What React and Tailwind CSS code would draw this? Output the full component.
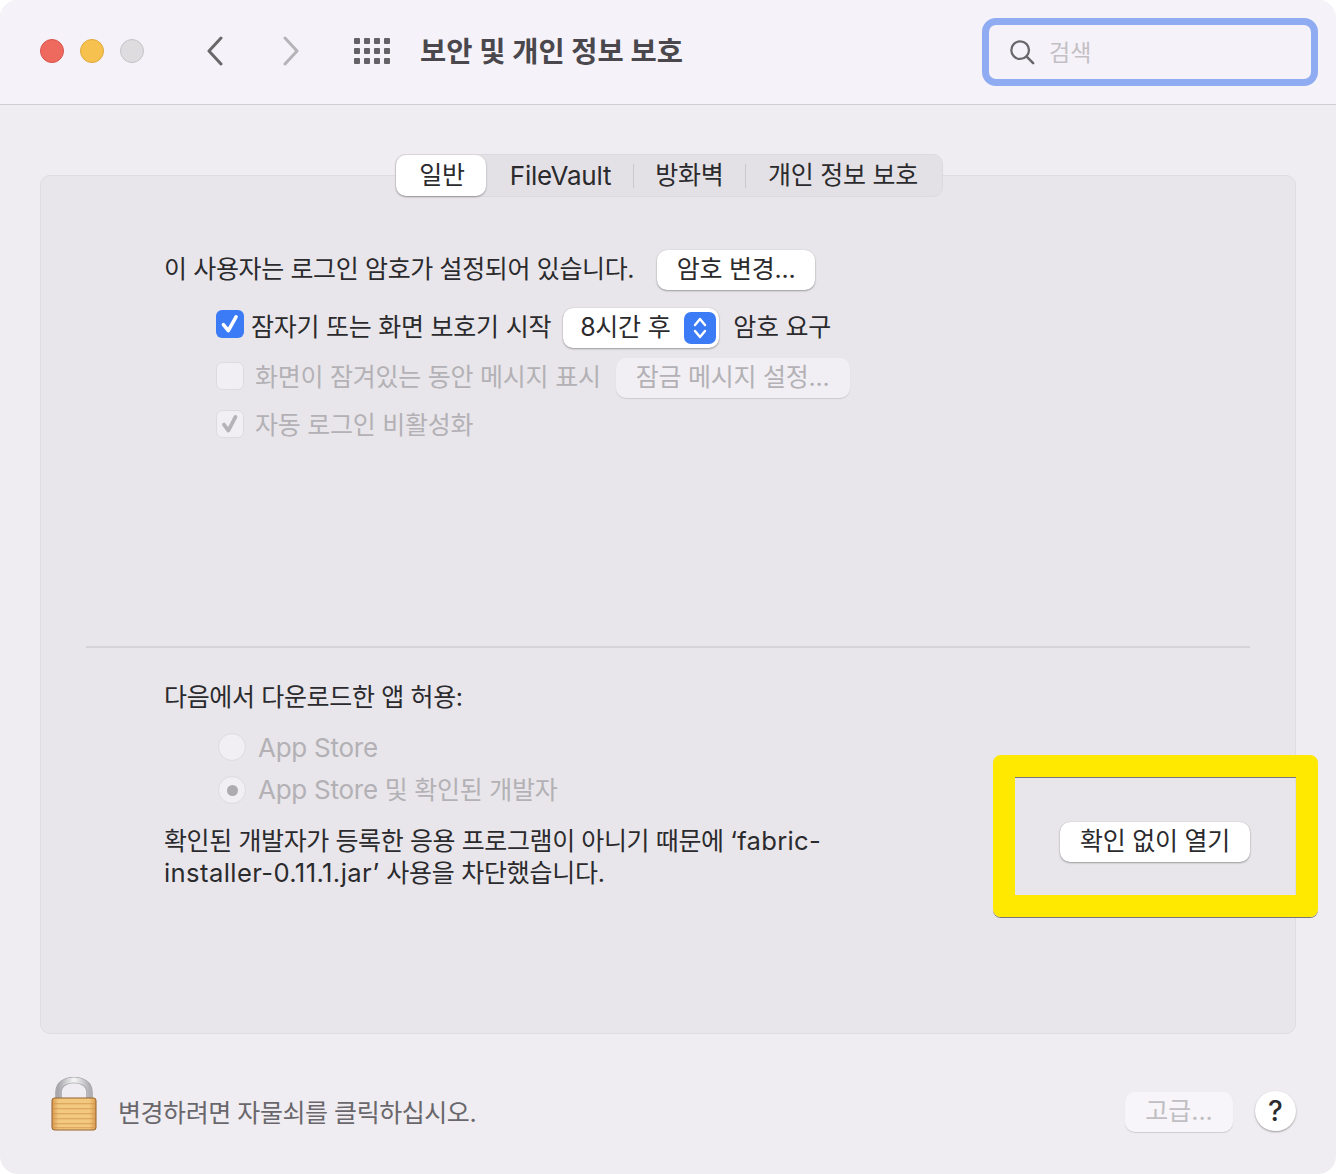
const font = { fontFamily: '"Inter", "Noto Sans CJK KR", sans-serif' };

const Btn = ({ className = "", children }) => (
  <div
    className={`h-10 pb-[1px] flex items-center justify-center rounded-[10px] bg-white text-[#2b2a2d] text-[25px] tracking-[-0.25px] whitespace-nowrap shadow-[0_1px_2px_rgba(0,0,0,0.32),0_0_1px_rgba(0,0,0,0.2)] ${className}`}
  >
    {children}
  </div>
);

const DisabledCheck = ({ checked, className = "" }) => (
  <div className={`w-7 h-7 rounded-[6px] bg-[#f1eff3] border border-[#dddbdf] flex items-center justify-center ${className}`}>
    {checked && (
      <svg width="22" height="22" viewBox="0 0 20 20" fill="none">
        <path d="M4.5 10.5 L8.5 16 L15 3.5" stroke="#b5b3b7" strokeWidth="3.4" strokeLinecap="round" strokeLinejoin="round" />
      </svg>
    )}
  </div>
);

const Radio = ({ checked }) => (
  <div className="w-7 h-7 rounded-full bg-[#f1eff3] border border-[#dddbdf] flex items-center justify-center">
    {checked && <div className="w-[11px] h-[11px] rounded-full bg-[#adabaf]" />}
  </div>
);

const Lock = () => (
  <svg width="46" height="54" viewBox="0 0 46 54">
    <defs>
      <linearGradient id="shackle" x1="0" x2="1" y1="0" y2="0">
        <stop offset="0" stopColor="#a9a9ad" />
        <stop offset="0.5" stopColor="#f6f6f8" />
        <stop offset="1" stopColor="#b0b0b4" />
      </linearGradient>
      <linearGradient id="lockBody" x1="0" x2="1" y1="0" y2="0">
        <stop offset="0" stopColor="#d99a4e" />
        <stop offset="0.15" stopColor="#f3c87f" />
        <stop offset="0.85" stopColor="#f3c87f" />
        <stop offset="1" stopColor="#d99a4e" />
      </linearGradient>
    </defs>
    <path d="M7.5 22 V15 C7.5 -1 38.5 -1 38.5 15 V22" fill="none" stroke="#a5a5a9" strokeWidth="6.6" />
    <path d="M7.5 22 V15 C7.5 -1 38.5 -1 38.5 15 V22" fill="none" stroke="url(#shackle)" strokeWidth="5" />
    <rect x="1" y="21" width="44" height="32" rx="2.5" fill="url(#lockBody)" stroke="#95602a" strokeWidth="1" />
    {[26, 31, 36, 41, 46, 50].map((y) => (
      <rect key={y} x="2" y={y} width="42" height="1.3" fill="#cf9349" opacity="0.6" />
    ))}
  </svg>
);

export default function App() {
  return (
    <div className="w-[1336px] h-[1174px] bg-white" style={font}>
      <div className="w-full h-full rounded-[18px] overflow-hidden bg-[#efedf1] flex flex-col">
        {/* title bar */}
        <div className="h-[105px] shrink-0 bg-[#f6f2f9] border-b border-[#cfcdd0] flex items-center pl-10 pr-[18px]">
          <div className="flex gap-4 mt-[-2px]">
            <div className="w-6 h-6 rounded-full bg-[#ee6a5f] border border-[#d9534a]" />
            <div className="w-6 h-6 rounded-full bg-[#f6c14f] border border-[#dfa938]" />
            <div className="w-6 h-6 rounded-full bg-[#dfdce0] border border-[#c6c3c8]" />
          </div>
          <svg className="ml-[61px] mt-[-2px]" width="20" height="30" viewBox="0 0 20 30" fill="none">
            <path d="M16 2 L4 15 L16 28" stroke="#69676a" strokeWidth="3" strokeLinecap="round" strokeLinejoin="round" />
          </svg>
          <svg className="ml-[56px] mt-[-2px]" width="20" height="30" viewBox="0 0 20 30" fill="none">
            <path d="M4 2 L16 15 L4 28" stroke="#b6b4b8" strokeWidth="3" strokeLinecap="round" strokeLinejoin="round" />
          </svg>
          <div className="ml-[53px] mt-[-2px] grid grid-cols-4 gap-x-[4px] gap-y-[4px]">
            {Array.from({ length: 12 }).map((_, i) => (
              <div key={i} className="w-[6px] h-[6px] rounded-[1px] bg-[#646266]" />
            ))}
          </div>
          <div className="ml-[30px] text-[28.5px] font-bold text-[#4a484c] whitespace-nowrap">보안 및 개인 정보 보호</div>
          <div className="ml-auto w-[336px] h-[68px] mt-[-1px] rounded-[14px] border-[7px] border-[#8fabf1] bg-[#f6f2f9] flex items-center pl-5">
            <svg width="26" height="26" viewBox="0 0 28 28" fill="none">
              <circle cx="12" cy="12" r="9.5" stroke="#69676b" strokeWidth="2.4" />
              <path d="M19 19 L26 26" stroke="#69676b" strokeWidth="2.8" strokeLinecap="round" />
            </svg>
            <span className="ml-[14px] mt-[3px] text-[23px] text-[#c3c0c5]">검색</span>
          </div>
        </div>

        {/* tabs */}
        <div className="flex justify-center mt-[49px] relative z-10">
          <div className="h-[43px] w-[548px] ml-[2px] flex items-center rounded-[10px] bg-[#e3e1e5] border border-[#dcdade] text-[25px] tracking-[-0.25px] text-[#2b2a2d]">
            <div className="w-[90px] h-[41px] pl-[2px] rounded-[10px] bg-white shadow-[0_1px_2px_rgba(0,0,0,0.35)] flex items-center justify-center">일반</div>
            <div className="w-[147px] pb-[1px] pl-[2px] text-center text-[26px]">FileVault</div>
            <div className="w-[1px] h-[24px] bg-[#cac8cc]" />
            <div className="w-[111px] text-center">방화벽</div>
            <div className="w-[1px] h-[24px] bg-[#cac8cc]" />
            <div className="flex-1 text-center pr-[2px] whitespace-nowrap">개인 정보 보호</div>
          </div>
        </div>

        {/* main panel */}
        <div className="mx-10 mt-[-22px] h-[859px] shrink-0 rounded-[10px] bg-[#e8e6ea] border border-[#dedcdf] px-[45px] text-[25px] tracking-[-0.25px] text-[#2b2a2d]">
          <div className="pl-[78px] pt-[74px]">
            <div className="flex items-center h-10">
              <span className="whitespace-nowrap tracking-[-0.37px]">이 사용자는 로그인 암호가 설정되어 있습니다.</span>
              <Btn className="w-[158px] ml-[23px]">암호 변경...</Btn>
            </div>
            <div className="flex items-center h-10 mt-[18px] pl-[52px]">
              <div className="w-7 h-7 rounded-[6px] bg-[#3b7cf6] flex items-center justify-center mt-[-8px]">
                <svg width="22" height="22" viewBox="0 0 20 20" fill="none">
                  <path d="M4 10.5 L8.5 16 L15.5 3.5" stroke="white" strokeWidth="3.2" strokeLinecap="round" strokeLinejoin="round" />
                </svg>
              </div>
              <span className="ml-[7px] whitespace-nowrap">잠자기 또는 화면 보호기 시작</span>
              <Btn className="w-[156px] ml-[12px] !justify-start pl-[17px] relative">
                8시간 후
                <div className="absolute right-[3px] top-[4px] w-[32px] h-[32px] rounded-[7px] bg-[#3b7cf6] flex items-center justify-center">
                  <svg width="20" height="26" viewBox="0 0 20 26" fill="none">
                    <path d="M5 10 L10 4 L15 10 M5 16 L10 22 L15 16" stroke="white" strokeWidth="2.4" strokeLinecap="round" strokeLinejoin="round" />
                  </svg>
                </div>
              </Btn>
              <span className="ml-[14px] whitespace-nowrap">암호 요구</span>
            </div>
            <div className="flex items-center h-10 mt-[10px] pl-[52px] text-[#b3b1b5]">
              <DisabledCheck className="mt-[-5px]" />
              <span className="ml-[11px] whitespace-nowrap">화면이 잠겨있는 동안 메시지 표시</span>
              <div className="w-[234px] h-10 pb-[1px] ml-[15px] rounded-[10px] bg-[#f1eff3] shadow-[0_1px_1px_rgba(0,0,0,0.12)] flex items-center justify-center whitespace-nowrap">
                잠금 메시지 설정...
              </div>
            </div>
            <div className="flex items-center h-10 mt-[6px] pl-[52px] text-[#b3b1b5]">
              <DisabledCheck checked />
              <span className="ml-[11px] mt-[3px] whitespace-nowrap">자동 로그인 비활성화</span>
            </div>
          </div>

          <div className="h-[2px] bg-[#d6d4d8] mt-[202px]" />

          <div className="pl-[78px] pt-[30px] relative">
            <div className="h-10 flex items-center whitespace-nowrap tracking-[-0.35px]">다음에서 다운로드한 앱 허용:</div>
            <div className="flex items-center h-10 mt-[9px] pl-[54px] text-[#b3b1b5]">
              <Radio />
              <span className="ml-[12px] text-[26px]">App Store</span>
            </div>
            <div className="flex items-center h-10 mt-[3px] pl-[54px] text-[#b3b1b5]">
              <Radio checked />
              <span className="ml-[12px] whitespace-nowrap"><span className="text-[26px]">App Store</span> 및 확인된 개발자</span>
            </div>
            <div className="flex items-start justify-between mt-[15px]">
              <p className="w-[680px] leading-[32px] whitespace-nowrap tracking-[-0.4px]">
                확인된 개발자가 등록한 응용 프로그램이 아니기 때문에 <span className="text-[25.6px] tracking-[0.3px]">‘fabric-</span>
                <br />
                <span className="text-[25.6px] tracking-[0.4px]">installer-0.11.1.jar’</span> <span className="tracking-[-0.25px]">사용을 차단했습니다.</span>
              </p>
              <Btn className="w-[190px] -mt-[3px]">확인 없이 열기</Btn>
            </div>
          </div>
        </div>

        {/* footer */}
        <div className="flex items-center h-[140px] pl-[51px] pr-[40px]">
          <Lock />
          <span className="ml-[21px] mt-[20px] text-[25px] tracking-[-0.45px] text-[#69676b] whitespace-nowrap">변경하려면 자물쇠를 클릭하십시오.</span>
          <div className="ml-auto w-[108px] h-10 mt-[15px] rounded-[10px] bg-[#f7f5f9] shadow-[0_1px_1px_rgba(0,0,0,0.14)] flex items-center justify-center text-[25px] text-[#c0bec2]">
            고급...
          </div>
          <div className="ml-[22px] w-[41px] h-10 mt-[13px] rounded-full bg-white shadow-[0_1px_2px_rgba(0,0,0,0.35)] flex items-center justify-center text-[28px] font-medium text-[#2b2a2d]">
            ?
          </div>
        </div>
      </div>

      {/* yellow annotation */}
      <div className="fixed left-[993px] top-[755px] w-[325px] h-[162px] rounded-[8px] border-[22px] border-[#ffe900] shadow-[0_1px_0_#77767a,inset_0_1px_0_#77767a] pointer-events-none" />
    </div>
  );
}
